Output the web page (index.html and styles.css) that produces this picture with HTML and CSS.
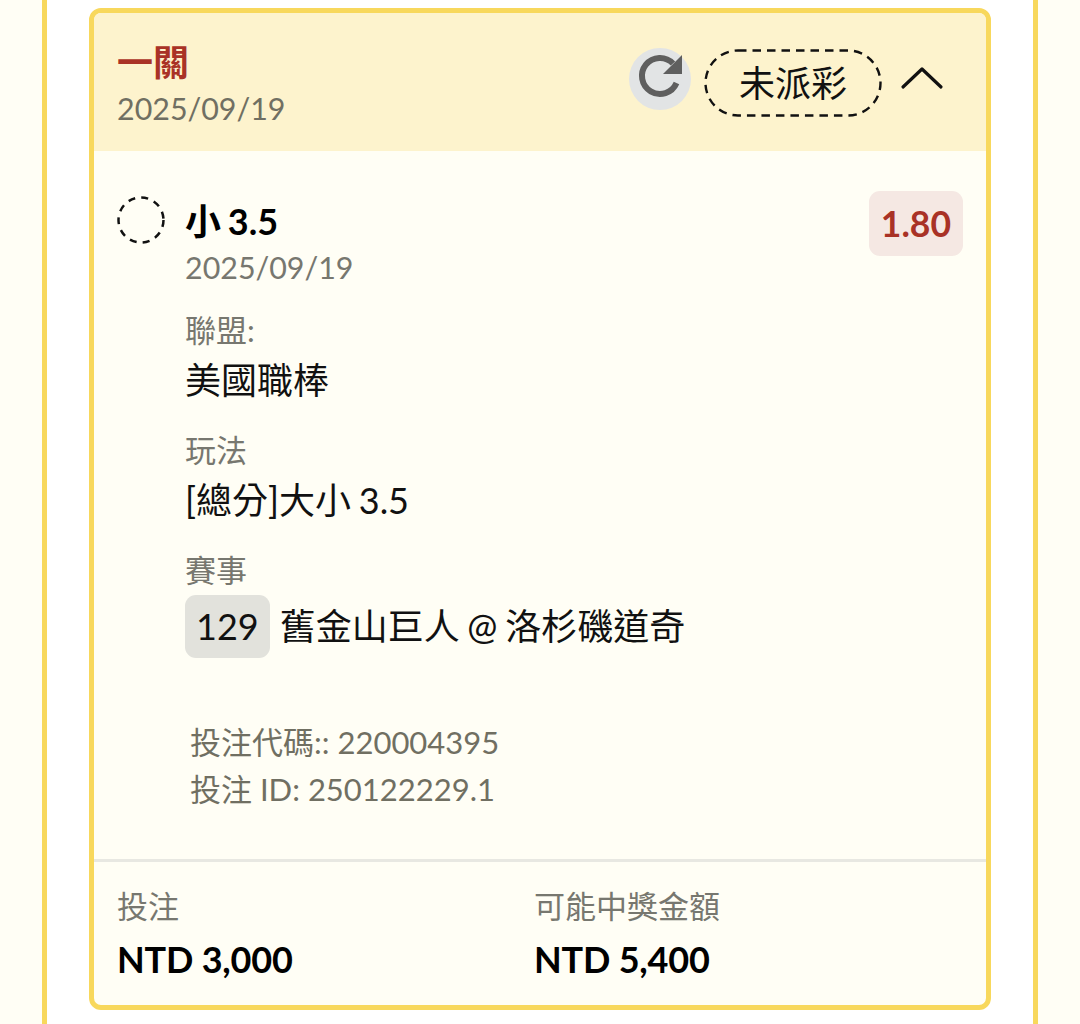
FILE: index.html
```html
<!DOCTYPE html>
<html lang="zh-Hant">
<head>
    <meta charset="UTF-8">
    <meta name="viewport" content="width=device-width, initial-scale=1.0">
    <title>一關</title>
    <link rel="stylesheet" href="styles.css">
</head>
<body>
    <div class="frame">
        <div class="card">
            <div class="card-head">
                <div class="head-text">
                    <div class="title">一關</div>
                    <div class="date">2025/09/19</div>
                </div>
                <div class="head-actions">
                    <button class="refresh" aria-label="refresh">
                        <svg width="62" height="62" viewBox="0 0 62 62">
                            <path d="M44 15.5A18 18 0 1 0 47.5 35" fill="none" stroke="#5f5f5f" stroke-width="6"/>
                            <path d="M53 7V26H34Z" fill="#5f5f5f"/>
                        </svg>
                    </button>
                    <span class="status">
                        <svg class="status-line" width="178" height="68" viewBox="0 0 178 68">
                            <rect x="1.5" y="1.5" width="175" height="65" rx="32.5" fill="none" stroke="#111" stroke-width="2.4" stroke-dasharray="8.5 6"/>
                        </svg>
                        未派彩
                    </span>
                    <svg class="chevron" width="44" height="26" viewBox="0 0 44 26">
                        <path d="M3 23L22 5L41 23" fill="none" stroke="#111" stroke-width="3.2" stroke-linecap="round" stroke-linejoin="round"/>
                    </svg>
                </div>
            </div>

            <div class="card-body">
                <div class="bet">
                    <svg class="pending" width="48" height="48" viewBox="0 0 48 48">
                        <circle cx="24" cy="24" r="22.5" fill="none" stroke="#111" stroke-width="2.5" stroke-dasharray="7 6.2"/>
                    </svg>
                    <div class="bet-main">
                        <div class="bet-top">
                            <div>
                                <div class="pick">小 3.5</div>
                                <div class="date">2025/09/19</div>
                            </div>
                            <div class="odds">1.80</div>
                        </div>

                        <div class="field">
                            <div class="label">聯盟:</div>
                            <div class="value">美國職棒</div>
                        </div>
                        <div class="field">
                            <div class="label">玩法</div>
                            <div class="value">[總分]大小 3.5</div>
                        </div>
                        <div class="field">
                            <div class="label">賽事</div>
                            <div class="value match"><span class="match-no">129</span>舊金山巨人 @ 洛杉磯道奇</div>
                        </div>
                    </div>
                </div>

                <div class="refs">
                    <div>投注代碼:: 220004395</div>
                    <div>投注 ID: 250122229.1</div>
                </div>
            </div>

            <div class="card-foot">
                <div class="amount">
                    <div class="label">投注</div>
                    <div class="money">NTD 3,000</div>
                </div>
                <div class="amount">
                    <div class="label">可能中獎金額</div>
                    <div class="money">NTD 5,400</div>
                </div>
            </div>
        </div>
    </div>
</body>
</html>
```

FILE: styles.css
```css
body {
    margin: 0;
    background: #fffef5;
    font-family: Lato, "Noto Sans CJK TC", sans-serif;
    color: #111;
}

.frame {
    box-sizing: border-box;
    width: 996px;
    height: 1024px;
    margin: 0 42px;
    padding: 8px 42px 0;
    background: #fff;
    border-left: 5px solid #f8d85c;
    border-right: 5px solid #f8d85c;
    overflow: hidden;
}

.card {
    box-sizing: border-box;
    height: 1002px;
    background: #fffef5;
    border: 5px solid #f8d85c;
    border-radius: 12px;
    overflow: hidden;
}

/* Entête */
.card-head {
    display: flex;
    justify-content: space-between;
    align-items: flex-start;
    box-sizing: border-box;
    height: 138px;
    padding: 26px 23px 0;
    background: #fdf3cd;
}

.title {
    font-size: 36px;
    line-height: 46px;
    font-weight: 700;
    color: #a93226;
}

.date {
    margin-top: 2px;
    font-size: 30.4px;
    line-height: 42px;
    color: #706f62;
}

.head-actions {
    display: flex;
    align-items: flex-start;
    margin-top: 9px;
}

.refresh {
    display: block;
    width: 62px;
    height: 62px;
    padding: 0;
    border: 0;
    border-radius: 50%;
    background: #e2e4e5;
}

.refresh svg {
    display: block;
}

.status {
    position: relative;
    width: 178px;
    height: 68px;
    margin: 1px 0 0 13px;
    font-size: 36px;
    line-height: 68px;
    text-align: center;
}

.status-line {
    position: absolute;
    left: 0;
    top: 0;
}

.chevron {
    margin: 16px 19px 0 18px;
}

/* Corps */
.card-body {
    box-sizing: border-box;
    height: 711px;
    padding: 40px 23px 0;
    border-bottom: 3px solid #e8e8e2;
}

.bet {
    display: flex;
    align-items: flex-start;
    gap: 20px;
}

.pending {
    margin-top: 5px;
    flex: none;
}

.bet-main {
    flex: 1;
}

.bet-top {
    display: flex;
    justify-content: space-between;
    align-items: flex-start;
    margin-bottom: 25px;
}

.pick {
    margin-top: 3px;
    font-size: 36px;
    line-height: 55px;
    font-weight: 700;
    word-spacing: -2px;
    color: #000;
}

.bet-top .date {
    margin-top: 0;
    color: #77776f;
    line-height: 36px;
}

.odds {
    padding: 0 12px;
    height: 65px;
    border-radius: 11px;
    background: #f5e8e3;
    font-size: 35.5px;
    line-height: 65px;
    font-weight: 700;
    color: #a93226;
}

.field {
    margin-top: 20px;
}

.label {
    font-size: 31px;
    line-height: 40px;
    color: #77776f;
}

.value {
    font-size: 36px;
    line-height: 60px;
    word-spacing: -1.5px;
    color: #111;
}

.match {
    display: flex;
    align-items: center;
    margin-top: 5px;
    line-height: 63px;
}

.match-no {
    padding: 0 11px;
    margin-right: 10px;
    border-radius: 11px;
    background: #e2e2dc;
}

.refs {
    margin: 61px 0 0 73px;
    font-size: 31px;
    line-height: 47px;
    color: #706f62;
}

/* Pied */
.card-foot {
    display: flex;
    padding: 24px 23px 0;
}

.amount {
    width: 417px;
}

.money {
    margin-top: 10px;
    font-size: 36px;
    line-height: 46px;
    font-weight: 700;
    letter-spacing: -0.2px;
    color: #000;
}
```
